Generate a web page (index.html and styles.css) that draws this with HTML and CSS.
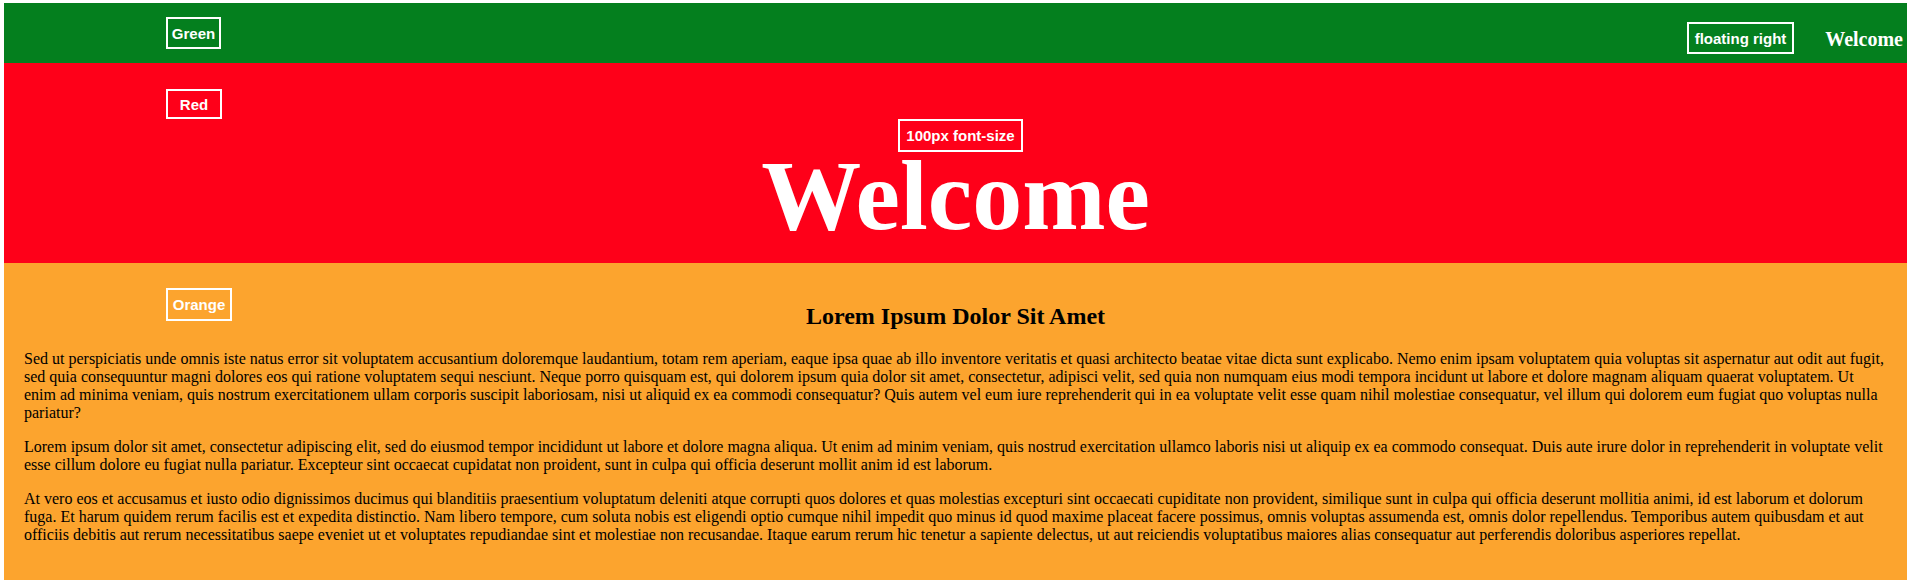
FILE: index.html
```html
<!DOCTYPE html>
<html lang="en">
<head>
<meta charset="utf-8">
<title>Welcome</title>
<link rel="stylesheet" href="styles.css">
</head>
<body>
  <header class="bar-green">
    <span class="tag tag-green">Green</span>
    <span class="tag tag-float">floating right</span>
    <div class="brand">Welcome</div>
  </header>
  <section class="bar-red">
    <span class="tag tag-red">Red</span>
    <span class="tag tag-size">100px font-size</span>
    <h1 class="hero">Welcome</h1>
  </section>
  <main class="bar-orange">
    <span class="tag tag-orange">Orange</span>
    <h2 class="title">Lorem Ipsum Dolor Sit Amet</h2>
    <p class="copy">Sed ut perspiciatis unde omnis iste natus error sit voluptatem accusantium doloremque laudantium, totam rem aperiam, eaque ipsa quae ab illo inventore veritatis et quasi architecto beatae vitae dicta sunt explicabo. Nemo enim ipsam voluptatem quia voluptas sit aspernatur aut odit aut fugit, sed quia consequuntur magni dolores eos qui ratione voluptatem sequi nesciunt. Neque porro quisquam est, qui dolorem ipsum quia dolor sit amet, consectetur, adipisci velit, sed quia non numquam eius modi tempora incidunt ut labore et dolore magnam aliquam quaerat voluptatem. Ut enim ad minima veniam, quis nostrum exercitationem ullam corporis suscipit laboriosam, nisi ut aliquid ex ea commodi consequatur? Quis autem vel eum iure reprehenderit qui in ea voluptate velit esse quam nihil molestiae consequatur, vel illum qui dolorem eum fugiat quo voluptas nulla pariatur?</p>
    <p class="copy">Lorem ipsum dolor sit amet, consectetur adipiscing elit, sed do eiusmod tempor incididunt ut labore et dolore magna aliqua. Ut enim ad minim veniam, quis nostrud exercitation ullamco laboris nisi ut aliquip ex ea commodo consequat. Duis aute irure dolor in reprehenderit in voluptate velit esse cillum dolore eu fugiat nulla pariatur. Excepteur sint occaecat cupidatat non proident, sunt in culpa qui officia deserunt mollit anim id est laborum.</p>
    <p class="copy">At vero eos et accusamus et iusto odio dignissimos ducimus qui blanditiis praesentium voluptatum deleniti atque corrupti quos dolores et quas molestias excepturi sint occaecati cupiditate non provident, similique sunt in culpa qui officia deserunt mollitia animi, id est laborum et dolorum fuga. Et harum quidem rerum facilis est et expedita distinctio. Nam libero tempore, cum soluta nobis est eligendi optio cumque nihil impedit quo minus id quod maxime placeat facere possimus, omnis voluptas assumenda est, omnis dolor repellendus. Temporibus autem quibusdam et aut officiis debitis aut rerum necessitatibus saepe eveniet ut et voluptates repudiandae sint et molestiae non recusandae. Itaque earum rerum hic tenetur a sapiente delectus, ut aut reiciendis voluptatibus maiores alias consequatur aut perferendis doloribus asperiores repellat.</p>
  </main>
</body>
</html>
```

FILE: styles.css
```css
html {
  background: #ffffff;
}

body {
  margin: 3px 4px 6px 4px;
  font-family: "Liberation Serif", "Times New Roman", serif;
  color: #000000;
}

.bar-green {
  position: relative;
  box-sizing: border-box;
  height: 60px;
  background: #047f1e;
  display: flex;
  justify-content: flex-end;
  align-items: flex-start;
  padding: 25px 4px 0 0;
}

.brand {
  font-family: "Liberation Serif", "Times New Roman", serif;
  font-weight: bold;
  font-size: 20px;
  line-height: 23px;
  color: #ffffff;
}

.bar-red {
  position: relative;
  box-sizing: border-box;
  height: 200px;
  background: #fe0019;
  padding-top: 89px;
}

.hero {
  margin: 0;
  text-align: center;
  font-family: "Liberation Serif", "Times New Roman", serif;
  font-weight: bold;
  font-size: 100px;
  line-height: 88px;
  color: #ffffff;
}

.bar-orange {
  position: relative;
  display: block;
  background: #fca42e;
  padding: 20px;
}

.title {
  margin: 20px 0;
  text-align: center;
  font-size: 24px;
  font-weight: bold;
  line-height: 27px;
}

.copy {
  margin: 16px 0;
  font-size: 16px;
  line-height: 18px;
}

.tag {
  position: absolute;
  box-sizing: border-box;
  display: flex;
  align-items: center;
  justify-content: center;
  border: 2px solid #ffffff;
  font-family: "Liberation Sans", Arial, sans-serif;
  font-weight: bold;
  font-size: 15px;
  line-height: 17px;
  color: #ffffff;
  white-space: nowrap;
}

.tag-green {
  left: 162px;
  top: 14px;
  width: 55px;
  height: 32px;
}

.tag-float {
  right: 113px;
  top: 19px;
  width: 107px;
  height: 32px;
}

.tag-red {
  left: 162px;
  top: 26px;
  width: 56px;
  height: 30px;
}

.tag-size {
  left: 894px;
  top: 56px;
  width: 125px;
  height: 33px;
}

.tag-orange {
  left: 162px;
  top: 25px;
  width: 66px;
  height: 33px;
}
```
